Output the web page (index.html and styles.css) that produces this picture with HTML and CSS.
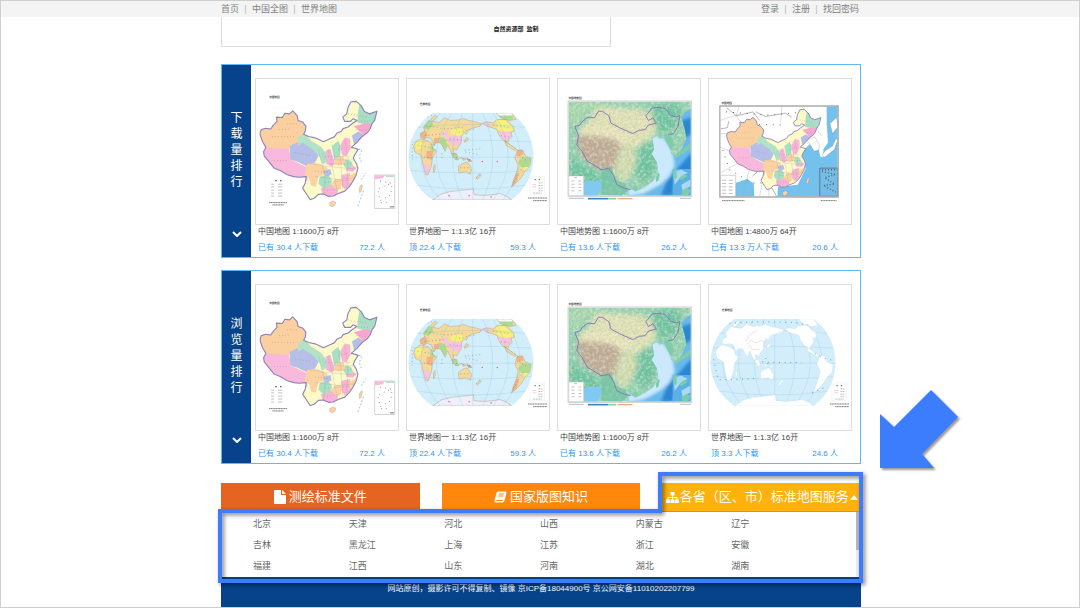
FILE: index.html
```html
<!DOCTYPE html>
<html lang="zh-CN">
<head>
<meta charset="utf-8">
<meta name="viewport" content="width=device-width, initial-scale=1">
<title>标准地图服务</title>
<link rel="stylesheet" href="styles.css">
</head>
<body>
<svg class="defs" width="0" height="0" aria-hidden="true">
  <defs>
    <path id="cn-outline" d="M133 215L136 208 150 204 165 206 172 195 184 183 182 170 200 171 208 158 222 160 232 151 245 165 248 180 262 185 272 198 270 212 265 222 280 229 300 233 325 245 345 236 358 230 367 218 380 213 385 205 400 200 412 190 427 180 415 175 408 183 390 183 384 170 396 160 400 140 409 123 425 122 440 135 450 153 465 160 488 152 481 180 473 190 467 206 460 216 442 230 428 246 410 262 418 264 431 268 420 285 416 295 425 310 430 325 425 345 415 365 405 380 390 395 370 402 355 410 340 411 325 404 310 405 298 416 285 421 275 406 262 386 270 370 273 351 250 353 235 351 215 345 195 333 175 325 160 306 145 288 143 275 150 262 140 245 133 225Z"/>
    <clipPath id="cn-clip"><use href="#cn-outline"/></clipPath>
    <g id="cn">
      <g clip-path="url(#cn-clip)">
        <path fill="#fbfac8" d="M120 110h380v320H120z"/>
        <path fill="#fbd0a0" d="M120 140h130l28 60-8 30-20 12-10 20-30 6-80-4z"/>
        <path fill="#f8b9dc" d="M120 262l100 4 6 32 26 14 26 12-2 40H150z"/>
        <path fill="#b5bfe8" d="M222 258l24-12 30-2 22 14 14 26-12 24-24 12-30-14-22-8z"/>
        <path fill="#b4e2c6" d="M248 232l20-14 20 24 30 18 14 20 4 26-14 8-8-22-22-24-30-20-14 8z"/>
        <path fill="#a9dec5" d="M430 160l8-50 60 30-14 54-30-2-26-6z"/>
        <path fill="#f7a8d0" d="M418 198l36-10 30 8-10 28-26 4-14-16z"/>
        <path fill="#b3bfe6" d="M412 226l20-12 18 14-10 18-20 14z"/>
        <path fill="#f9b3d6" d="M376 256l14-24 16 4 2 30-14 24-12-4zM332 272l14-6 8 26 8 20-14 8-14-10zM380 346l26-6 4 34-20 16-10-14zM318 386l34-10 18 10-6 26-40 2zM392 318l22 0 12 6-12 12-20-4z"/>
        <path fill="#a9dfc2" d="M350 258l20-16 8 20-4 34-16 4zM314 352l22-8 14 14-2 20-24 8-14-14zM392 298l18 6 6 16-20 6-12-12zM318 278l12-4 6 26-14 2z"/>
        <path fill="#fbd2a1" d="M276 310l30 0 32 14-4 20-24 6-8 32-14-4-6-22-14-10zM348 374l14-16 18 0-2 30-14 4zM402 350l24-12-6 36-16-2zM366 292l20-4 6 22-22 8-14-8z"/>
        <path fill="#b3bfe6" d="M324 334l22-6 4 16-16 8z"/>
        <path fill="none" stroke="#9c8fa6" stroke-opacity=".55" stroke-width="1.2" d="M276 310l60 10 90 8M300 350l70 10 54-6M340 270l14 60 14 70M372 250l6 60 6 80M390 240l10 60-4 90M310 270l20 80-4 60M350 300h76"/>
        <g fill="none" stroke="#7a5555" stroke-width="2" stroke-opacity=".6" stroke-dasharray="2 7">
          <path d="M170 229h66M175 302h45M190 208l36-2M238 278l46 8M322 218l92-34M300 334l40 4M330 290l80 0M335 312l80 0M330 368l76-6M336 394l40-8M400 160l60 10M440 182l24 2M424 208l30 2M370 270l34-10M214 190l30 0"/>
        </g>
      </g>
      <use href="#cn-outline" fill="none" stroke="#8f83ba" stroke-width="3.4" stroke-linejoin="round"/>
      <path fill="#fbd2a1" stroke="#9a8da5" d="M344 430l10-5 9 4-3 9-9 5-7-5zM434 386l6-10 4 2-4 18-5 4z"/>
    </g>

    <symbol id="map-china" viewBox="120 54 432 441">
      <text class="map-label" x="160" y="111">中国地图</text>
      <use href="#cn"/>
      <path fill="none" stroke="#5d9ac0" stroke-width="2" stroke-dasharray="5 6" d="M430 440l8-20 10-30M440 360l14-20M412 262l30 8-8 20 8 20"/>
      <path fill="none" stroke="#8a8a8a" stroke-width="1.6" stroke-dasharray="9 12 13 60" d="M166 374h38M166 382h38M166 392h38M166 401h38M166 410h38"/>
      <path stroke="#666" stroke-width="4" stroke-dasharray="5 10" d="M178 363h22"/>
      <path stroke="#777" stroke-width="3" stroke-dasharray="4 1" d="M160 430h55M170 437h35"/>
      <path fill="#fff" stroke="#aaa" stroke-width="1.5" d="M481 346h61v102h-61z"/>
      <path fill="#f8b9dc" d="M482 347h30l-6 9-24 3z"/><path fill="#b4e2c6" d="M512 347h28v5h-24z"/>
      <path fill="none" stroke="#666" stroke-width="3" stroke-dasharray="2 13" d="M498 365l36 6-4 35-32 18-8-35 36-16M500 430l24 0"/>
      <path stroke="#777" stroke-width="3" d="M527 443h13"/>
    </symbol>

    <path id="globe" d="M96 127H336C425 190 425 330 336 392H96C-2 330-2 190 96 127Z"/>
    <clipPath id="globe-clip"><use href="#globe"/></clipPath>
    <path id="land" d="M58 190L72 182 68 170 84 150 98 153 116 156 132 142 150 150 178 148 188 143 206 150 226 154 246 160 240 168 222 172 206 178 198 192 191 186 184 200 183 218 176 228 170 240 158 236 162 250 156 256 148 238 142 224 134 244 128 232 120 218 106 218 100 228 92 206 80 202 70 206 60 202ZM44 216L58 206 82 212 94 222 98 236 108 242 96 262 92 290 82 316 74 314 66 284 62 258 42 246 38 230ZM174 290L188 280 200 276 207 284 215 296 211 314 198 306 176 310ZM248 158L262 154 280 158 290 148 316 146 328 158 342 168 345 182 334 186 338 198 328 208 324 218 308 208 296 192 292 178 276 172 262 168ZM314 210L326 220 340 230 352 238 348 242 334 234 320 226ZM354 240L370 240 378 258 396 266 392 290 378 304 364 326 348 342 336 352 342 332 352 306 356 286 346 264ZM290 127h46l14 20-22 4-26-10zM90 146l14-12 6 4-14 14zM154 252l12 18 10 0-8-20zM182 262l16 6-8 4zM200 264l16 10-10 2zM98 292l5-8 1 14-5 12zM198 202l8 4-6 8-8 2zM228 326l12-14 4 4-12 14zM96 392L122 374 150 366 190 362 220 358 222 376 250 378 280 376 300 372 320 380 336 392Z"/>
    <clipPath id="land-clip"><use href="#land"/></clipPath>
    <path id="graticule" fill="none" d="M42 172Q210 152 388 172M22 216Q210 204 402 216M14 262H410M22 302Q210 318 402 302M42 346Q210 372 388 346M120 127Q0 260 120 392M155 127Q60 260 155 392M188 127Q125 260 188 392M218 127V392M248 127Q310 260 248 392M280 127Q372 260 280 392M310 127Q415 260 310 392"/>
    <g id="world-legend">
      <text class="map-label" x="57" y="103">世界地图</text>
      <path fill="#fff" stroke="#ddd" d="M392 322h44v54h-44z"/>
      <path stroke="#777" stroke-width="4" stroke-dasharray="4 9" d="M406 330h20"/>
      <path stroke="#f3a9b8" stroke-width="2" stroke-dasharray="10 6" d="M400 345h14M400 352h14"/>
      <path stroke="#999" stroke-width="2" stroke-dasharray="6 2" d="M418 340h12M418 348h12M418 356h12M418 364h12M402 371h26"/>
      <path stroke="#777" stroke-width="3" stroke-dasharray="4 1" d="M386 386h58M402 394h42"/>
    </g>

    <symbol id="map-world" viewBox="18 24 432 441">
      <use href="#globe" fill="#d3eefb"/>
      <g clip-path="url(#globe-clip)">
        <use href="#land" fill="#f3d99a"/>
        <g clip-path="url(#land-clip)">
          <path fill="#f6f07c" d="M152 180l24-8 18 10-6 12-24 4-12-8zM290 146l54 4v34l-30 2-22-10zM40 216l20-6 8 20-20 12zM372 284l12-4 6 16-16 8z"/>
          <path fill="#f7c3e0" d="M140 200l24-4 22 4-4 28-26-4-16-12zM294 184l44 0-6 22-24 2zM66 280l22 6-8 32-12-4zM240 150h28v22h-28zM120 188l20-6 6 12-14 8zM82 374h260v20H82z"/>
          <path fill="#aedb8f" d="M70 150l22-4 6 20-16 12-14-4zM120 200l16 6 4 20-10 20-14-28zM370 262l28 2-10 28-22 0-10-14zM90 216l16 6-4 24-14-6zM284 127h56v22h-40zM200 262h20v16h-20zM152 250h20v20h-18z"/>
          <path fill="#f5b384" d="M58 184l16-4 8 16-14 12-12-6zM78 242l20 0-4 28-18-6zM340 310l20 0-12 38-14 4zM100 204l18-2-4 18-14 0zM350 240l20-2 2 16-20 6z"/>
          <path fill="#fafbfe" d="M290 127h50v8h-46z"/><path fill="#edf0fb" d="M82 356h260v40H82z"/>
        </g>
        <use href="#land" fill="none" stroke="#a99e8b" stroke-width="1.3"/>
        <use href="#graticule" stroke="#7fb9d9" stroke-width="1.2" stroke-opacity=".6"/>
        <g fill="none" stroke="#5b6b78" stroke-width="2" stroke-opacity=".7" stroke-dasharray="3 8">
          <path d="M76 166l60 10 60-6M72 196l60-6M50 226l50 8M70 262l26 2M148 206l28 2M180 294h28M280 164l50 8M304 196l24 4M360 256l26 20M364 300l10-10M124 250v18M156 262l50 6M194 240l50-4M196 246l40 8M342 338l14-22M176 186l50-10M228 324l12-10M34 222l0 50M80 140l16-6M318 214l30 20"/>
        </g>
        <g fill="#e56a86"><circle cx="146" cy="379" r="2.5"/><circle cx="207" cy="379" r="2.5"/><circle cx="274" cy="383" r="2.5"/><circle cx="247" cy="275" r="2.5"/><circle cx="293" cy="275" r="2.5"/><circle cx="208" cy="270" r="3"/></g>
      </g>
      <use href="#world-legend"/>
    </symbol>

    <symbol id="map-world-blank" viewBox="18 24 432 441">
      <use href="#globe" fill="#d3edfb"/>
      <g clip-path="url(#globe-clip)">
        <use href="#graticule" stroke="#8cc5e4" stroke-width="1.2" stroke-opacity=".7"/>
        <use href="#land" fill="#fff" stroke="#b8dcec"/>
        <path fill="none" stroke="#efb9b9" stroke-width="1.5" d="M134 204l12-12 14 8 20-8 8 8M140 206l10 14 20 0M130 196l14-22 22-12"/>
        <path fill="none" stroke="#4ea3cf" stroke-width="3" stroke-dasharray="3 14" d="M80 140l90-4 110 2 40 8M32 250l14 62 60 0 50-4M180 258l50 2 70 0M340 232l24 14 36 8M332 352l38-16M190 246l8 20"/>
      </g>
      <use href="#world-legend"/>
    </symbol>

    <filter id="soft" x="-20%" y="-20%" width="140%" height="140%"><feGaussianBlur stdDeviation="8"/></filter>
    <filter id="soft-sea" x="-20%" y="-20%" width="140%" height="140%"><feGaussianBlur stdDeviation="5"/></filter>
    <filter id="relief" x="0" y="0" width="100%" height="100%"><feTurbulence type="fractalNoise" baseFrequency=".16" numOctaves="3" seed="4"/><feColorMatrix values="0 0 0 0 .25  0 0 0 0 .4  0 0 0 0 .3  1.8 0 0 0 -.62"/></filter>
    <filter id="highlight" x="0" y="0" width="100%" height="100%"><feTurbulence type="fractalNoise" baseFrequency=".1" numOctaves="3" seed="9"/><feColorMatrix values="0 0 0 0 .95  0 0 0 0 .94  0 0 0 0 .8  3 0 0 0 -1.3"/></filter>
    <clipPath id="sheet"><path d="M48 93h371v286H48z"/></clipPath>
    <clipPath id="sea-clip"><path d="M302 206l14-10 8 10 20-8-4 16 14 10 6 28 20 8 14-30 12-26-6-30-10-34 12-14 27-20v273H226l4-24 20 12 30-14 24-18 16-28-4-30-16-26 8-14z"/></clipPath>
    <symbol id="map-terrain" viewBox="15 24 432 441">
      <text class="map-label" x="47" y="86">中国地势图</text>
      <g clip-path="url(#sheet)">
        <path fill="#93d3b2" d="M48 93h371v286H48z"/>
        <g filter="url(#soft)">
          <path fill="#e4e3b6" d="M130 105l130 10 60 20-10 60-60 40-90-14-80-20 0-30 30-20z"/>
          <path fill="#efe7bd" d="M84 180l80-10 70 30-10 20-130-16z"/>
          <path fill="#c3ab95" d="M70 196l56 0 60 10 34 34 0 50-30 12-60-8-44-34z"/>
          <path fill="#d3deb0" d="M200 240l40-20 20 50-30 60-30 10-14-40z"/>
          <path fill="#6ec5a2" d="M48 254l40 30 60 30 0 40-100-20zM300 110l60-16 30 20-20 60-40 20-24-40zM270 220l46 0 0 80-40 40-30-40z"/>
          <path fill="#a7d9ae" d="M48 93h90l-60 60-30 10z"/>
        </g>
        <rect x="48" y="93" width="371" height="286" filter="url(#relief)" opacity=".32"/>
        <rect x="48" y="93" width="371" height="286" filter="url(#highlight)" opacity=".4"/>
        <g clip-path="url(#sea-clip)">
          <path fill="#6ab9ec" d="M220 90h200v290H220z"/>
          <g filter="url(#soft-sea)">
            <path fill="#cbe9fb" d="M296 190l44 14 24 44 6 40-18 34-26 24-50 26-48 10V320l60-20z"/>
            <path fill="#2c86d3" d="M346 334l26-30 20-24 34-36v64l-50 10-12 60h-36zM392 150l30-10v50l-30 20z"/>
          </g>
          <path fill="#5bb0e6" d="M364 298h55v80h-55z"/>
          <path fill="#a8d9f5" d="M366 306l24-6 20 10-20 10-20 26zM390 346l28-16v20l-24 14z"/>
        </g>
        <path fill="#7ecca9" d="M344 190l18 14 6 20-10 16-10-18-8-16zM392 240l16-14 11-6v12l-18 16-16 8-10 8-8-6zM312 326l7-16 6 2-4 20-7 6zM366 296l10 4 0 26-10 2zM384 326l14-12 12 4-20 14zM392 366l14-12 12 10-8 14h-18zM244 352l10-4 6 8-8 8-10-4z"/>
        <path fill="#80c9f0" d="M95 336l50-4 4 20-14 27H92z"/>
        <path fill="#6bc0a0" d="M146 300l30-10 16 40 30 14 4 20-18 15-60-4z" opacity=".6"/>
        <path fill="#fff" stroke="#aaa" d="M48 319h45v60H48z"/>
        <path fill="none" stroke="#a0a0a0" stroke-width="2" stroke-dasharray="9 12" d="M56 334h34M56 344h34M56 354h34M56 364h34M64 324h14"/>
        <path fill="none" stroke="#8b78b6" stroke-width="3" stroke-linejoin="round" d="M66 168l16-4 6-10 18-14 20 2 12-20 12 0 20 14 6 22 26 14 40 18 20-10 18-2 10-14 24-6-10-16-14 8-8-14 20-24 20-2 20 4 16 20 18 6 10-6-6 34-14 22-16 4M66 168l12 30-6 26 16 20 16 30 24 14 18 12 24-4 14 22 10 28 28 12 14 2"/>
      </g>
      <path fill="none" stroke="#d4d4d4" stroke-width="4" d="M46 91h375v290H46z"/>
      <path stroke="#999" stroke-width="2" d="M48 387h46M386 387h34"/><path stroke="#3c87b9" stroke-width="5" d="M106 388h62"/><path stroke="#90c9a5" stroke-width="5" d="M168 388h24"/><path stroke="#dfb37a" stroke-width="4" d="M196 388h46"/>
    </symbol>

    <clipPath id="sheet-s"><path d="M52 107h358v275H52z"/></clipPath>
    <symbol id="map-china-s" viewBox="18 24 432 441">
      <text class="map-label" x="56" y="100">中国地图</text>
      <g clip-path="url(#sheet-s)">
        <path fill="#fff" d="M52 107h358v275H52z"/>
        <path fill="#74c1ee" d="M376 107h34v275H226l2-30 60-6 24-50-14-50 34-30 20 20 4 24 10 2 0-24 14-20-4-60zM98 340l36-12 20 14 2 40H98z"/>
        <path fill="#fff" stroke="#888" d="M316 210l24-10 14 26-2 14-14 4-12-20zM362 256l10-14 22-14 10-22 6 2-10 30-30 24zM386 160l20-20 4 30-16 20z"/>
        <path fill="none" stroke="#aaa" stroke-width="1.2" d="M52 150l60-20M110 107l-10 30 20 24M240 107l-4 50M52 230l40 20M52 310l70-40M120 382l20-80M180 340l-8 42M200 340l0 42M300 107l60 90M52 190h30"/>
        <path fill="none" stroke="#777" stroke-width="1.6" d="M72 112l30 24 50-12 20 26M54 176l20-4 4-20M160 124l30 14 60-10 20 12M150 320l20-18 16 4 4 40 20 10 14 26"/>
        <path fill="none" stroke="#666" stroke-width="3" stroke-dasharray="3 18" d="M70 124l130 10 90-8 64 50M60 240l20 60 70 40 40 0M170 162l70 2"/>
        <use href="#cn" transform="translate(-35 17) scale(.806 .817)"/>
        <path fill="#fff" stroke="#888" d="M53 317h46v64H53z"/>
        <path fill="none" stroke="#999" stroke-width="2" stroke-dasharray="12 8" d="M58 332h36M58 342h36M58 352h36M58 362h36M58 372h36"/>
        <path fill="#74bde8" stroke="#555" stroke-width="2" d="M355 295h54v86h-54z"/>
        <path fill="none" stroke="#55606a" stroke-width="4" stroke-dasharray="3 6" d="M362 306l42 8-34 10 30 20-34 4 38 20M362 300h44"/>
      </g>
      <path fill="none" stroke="#aaa" stroke-width="4" d="M51 106h360v277H51z"/>
      <path stroke="#777" stroke-width="3" stroke-dasharray="4 1" d="M58 394h68M358 394h48"/>
    </symbol>
  </defs>
</svg>

<header class="topbar">
  <div class="wrap topbar-row">
    <nav class="links"><a href="#">首页</a><i>|</i><a href="#">中国全图</a><i>|</i><a href="#">世界地图</a></nav>
    <nav class="links"><a href="#">登录</a><i>|</i><a href="#">注册</a><i>|</i><a href="#">找回密码</a></nav>
  </div>
</header>

<main class="wrap">
  <div class="notice"><p>自然资源部&nbsp; 监制</p></div>

  <section class="rank">
    <div class="rank-side">
      <h2>下载量排行</h2>
      <button type="button" aria-label="更多下载排行"><svg viewBox="0 0 10 6"><path d="M1 1l4 4 4-4"/></svg></button>
    </div>
    <div class="cards">
      <article class="card"><svg class="thumb"><use href="#map-china"/></svg><h3><a href="#">中国地图 1:1600万 8开</a></h3><p><span>已有 30.4 人下载</span><span>72.2 人</span></p></article>
      <article class="card"><svg class="thumb"><use href="#map-world"/></svg><h3><a href="#">世界地图一 1:1.3亿 16开</a></h3><p><span>顶 22.4 人下载</span><span>59.3 人</span></p></article>
      <article class="card"><svg class="thumb"><use href="#map-terrain"/></svg><h3><a href="#">中国地势图 1:1600万 8开</a></h3><p><span>已有 13.6 人下载</span><span>26.2 人</span></p></article>
      <article class="card"><svg class="thumb"><use href="#map-china-s"/></svg><h3><a href="#">中国地图 1:4800万 64开</a></h3><p><span>已有 13.3 万人下载</span><span>20.6 人</span></p></article>
    </div>
  </section>

  <section class="rank">
    <div class="rank-side">
      <h2>浏览量排行</h2>
      <button type="button" aria-label="更多浏览排行"><svg viewBox="0 0 10 6"><path d="M1 1l4 4 4-4"/></svg></button>
    </div>
    <div class="cards">
      <article class="card"><svg class="thumb"><use href="#map-china"/></svg><h3><a href="#">中国地图 1:1600万 8开</a></h3><p><span>已有 30.4 人下载</span><span>72.2 人</span></p></article>
      <article class="card"><svg class="thumb"><use href="#map-world"/></svg><h3><a href="#">世界地图一 1:1.3亿 16开</a></h3><p><span>顶 22.4 人下载</span><span>59.3 人</span></p></article>
      <article class="card"><svg class="thumb"><use href="#map-terrain"/></svg><h3><a href="#">中国地势图 1:1600万 8开</a></h3><p><span>已有 13.6 人下载</span><span>26.2 人</span></p></article>
      <article class="card"><svg class="thumb"><use href="#map-world-blank"/></svg><h3><a href="#">世界地图一 1:1.3亿 16开</a></h3><p><span>顶 3.3 人下载</span><span>24.6 人</span></p></article>
    </div>
  </section>

  <section class="services">
    <div class="tabs">
      <button type="button" class="tab tab-files"><svg class="ico-file" viewBox="0 0 12 14"><path d="M1 0h6v5h5v8a1 1 0 0 1-1 1H1a1 1 0 0 1-1-1V1a1 1 0 0 1 1-1zM8 0l4 4H8z"/></svg>测绘标准文件</button>
      <button type="button" class="tab tab-know"><svg class="ico-book" viewBox="0 0 26 24"><path fill-rule="evenodd" d="M8 1h15q3 0 2 3l-4 15q-1 4-4 4H4q-4 0-3-4L5 4q1-3 3-3zM10 5l-.5 2h10l.5-2zM9 9l-.5 2h10l.5-2zM4 18q-.5 2 1 2h12l1-2z"/></svg>国家版图知识</button>
      <button type="button" class="tab tab-local" aria-expanded="true"><svg class="ico-tree" viewBox="0 0 26 22"><path d="M9 0h8v7h-3v3h8q1 0 1 1v4h3v7h-8v-7h3v-3h-7v3h3v7H9v-7h3v-3H5v3h3v7H0v-7h3v-4q0-1 1-1h8V7H9z"/></svg>各省（区、市）标准地图服务<svg class="ico-caret" viewBox="0 0 8 5"><path d="M4 0l4 5H0z"/></svg></button>
    </div>
    <div class="dropdown">
      <div class="provinces">
        <a href="#">北京</a><a href="#">天津</a><a href="#">河北</a><a href="#">山西</a><a href="#">内蒙古</a><a href="#">辽宁</a>
        <a href="#">吉林</a><a href="#">黑龙江</a><a href="#">上海</a><a href="#">江苏</a><a href="#">浙江</a><a href="#">安徽</a>
        <a href="#">福建</a><a href="#">江西</a><a href="#">山东</a><a href="#">河南</a><a href="#">湖北</a><a href="#">湖南</a>
      </div>
      <div class="track"><div class="bar"></div></div>
    </div>
    <svg class="callout" viewBox="0 0 650 116" aria-hidden="true"><path d="M4 41H444V4H645V111H4Z"/></svg>
    <svg class="arrow" viewBox="0 0 84 84" aria-hidden="true"><path d="M51 0L78 27 42 64 54 78H0V24L14 37Z"/></svg>
  </section>
</main>

<footer class="wrap footer">网站原创，摄影许可不得复制、镜像 京ICP备18044900号 京公网安备11010202207799</footer>
</body>
</html>
```
FILE: styles.css
```css
* {
  box-sizing: border-box;
}

body {
  display: flex;
  flex-direction: column;
  min-height: 100vh;
  margin: 0;
  padding-left: 2px;
  border: 1px solid #cfcfcf;
  background: #fff;
  color: #444;
  font-family: "Liberation Sans", "Noto Sans CJK SC", sans-serif;
  font-size: 8px;
  line-height: 12px;
}

a {
  color: inherit;
  text-decoration: none;
}

h2, h3, p {
  margin: 0;
  font-weight: normal;
}

button {
  padding: 0;
  border: 0;
  background: none;
  color: #fff;
  font: inherit;
  cursor: pointer;
}

.defs {
  position: absolute;
}

.wrap {
  width: 100%;
  max-width: 640px;
  margin: 0 auto;
}

/* top bar */
.topbar {
  margin-left: -2px;
  padding: 1px 0 0 2px;
  background: #f4f4f4;
}

.topbar-row {
  display: flex;
  justify-content: space-between;
  padding-right: 2px;
  color: #808080;
  font-size: 9px;
  line-height: 15px;
}

.links {
  display: flex;
}

.links i {
  width: 13px;
  color: #b8b8b8;
  font-style: normal;
  text-align: center;
}

.notice {
  width: 61%;
  height: 30px;
  margin-bottom: 17px;
  padding: 6px 72px 0 0;
  border: 1px solid #dcdcdc;
  border-top: 0;
  color: #222;
  font-family: "Liberation Serif", "Noto Sans CJK SC", serif;
  font-size: 6px;
  text-align: right;
}

.notice p {
  font-weight: bold;
}

/* ranking panels */
.rank {
  display: flex;
  margin-bottom: 12px;
  border: 1px solid #5eb8f8;
}

.rank-side {
  display: flex;
  flex-direction: column;
  align-items: center;
  justify-content: space-between;
  width: 29px;
  padding: 45px 0 20px;
  background: #07438a;
  color: #fff;
}

.rank-side h2 {
  width: 12px;
  font-size: 12px;
  line-height: 16px;
}

.rank-side svg {
  display: block;
  width: 10px;
  height: 6px;
  fill: none;
  stroke: #fff;
  stroke-width: 2;
}

.cards {
  display: grid;
  flex: 1;
  grid-template-columns: repeat(4, 1fr);
  gap: 7px;
  padding: 13px 8px 3px 4px;
}

.thumb {
  display: block;
  width: 100%;
  height: 147px;
  margin-bottom: 1px;
  border: 1px solid #ddd;
}

.map-label {
  fill: #333;
  font-size: 8px;
  font-weight: bold;
}

.card h3,
.card p {
  padding-left: 3px;
  font-size: 8px;
}

.card p {
  display: flex;
  justify-content: space-between;
  margin-top: 4px;
  padding-right: 14px;
  color: #2a94fb;
}

/* service tabs */
.services {
  position: relative;
  z-index: 1;
  margin-top: 19px;
}

.tabs {
  display: grid;
  grid-template-columns: repeat(3, 1fr);
  gap: 22px;
}

.tab {
  display: flex;
  align-items: center;
  justify-content: center;
  gap: 3px;
  height: 28px;
  font-size: 13px;
  line-height: 20px;
  white-space: nowrap;
}

.tab svg {
  flex: none;
  fill: #fff;
}

.tab-files { background: #e66421; }
.tab-know { background: #ff870c; }
.tab-local { background: #ffb10c; gap: 1px; }

.ico-file { width: 12px; height: 14px; }
.ico-book { width: 13px; height: 12px; }
.ico-tree { width: 13px; height: 11px; }
.ico-caret { width: 8px; height: 5px; }

.dropdown {
  display: flex;
  height: 66px;
  border-top: 1px solid #4fb3e6;
  background: #fff;
}

.provinces {
  display: grid;
  flex: 1;
  grid-template-columns: repeat(6, 1fr);
  grid-auto-rows: 21px;
  padding: 2px 29px 0 32px;
  color: #666;
  font-size: 9px;
  line-height: 21px;
}

.track {
  width: 5px;
  background: #eceef2;
}

.bar {
  height: 38px;
  background: #b4b8c0;
}

.callout {
  position: absolute;
  top: -13px;
  left: -5px;
  width: 650px;
  height: 116px;
  overflow: visible;
  fill: none;
  stroke: #3b7dfd;
  stroke-width: 4;
  filter: drop-shadow(2px 2px 2px rgba(0, 0, 0, 0.5));
  pointer-events: none;
}

.arrow {
  position: absolute;
  top: -93px;
  left: 659px;
  width: 84px;
  height: 84px;
  overflow: visible;
  fill: #3b7dfd;
  filter: drop-shadow(2px 2px 1px rgba(0, 0, 0, 0.4));
  pointer-events: none;
}

.footer {
  flex: 1;
  padding: 6px 0;
  background: #07438a;
  color: #fff;
  text-align: center;
}
```
